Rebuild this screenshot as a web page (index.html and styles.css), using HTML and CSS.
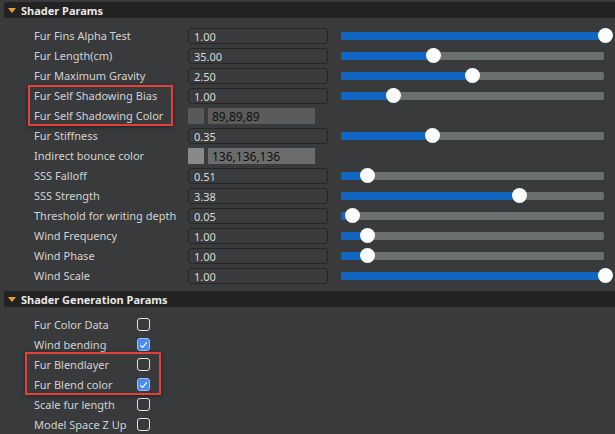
FILE: index.html
```html
<!DOCTYPE html>
<html>
<head>
<meta charset="utf-8">
<link rel="stylesheet" href="styles.css">
</head>
<body>
<div class="panel">
  <div class="section-head"><span class="tri"></span><span>Shader Params</span></div>
  <div class="params">
    <div class="row"><span class="label">Fur Fins Alpha Test</span><span class="field">1.00</span><div class="slider"><div class="fill" style="width:263px"></div><div class="thumb" style="left:264px"></div></div></div>
    <div class="row"><span class="label">Fur Length(cm)</span><span class="field">35.00</span><div class="slider"><div class="fill" style="width:92px"></div><div class="thumb" style="left:92px"></div></div></div>
    <div class="row"><span class="label">Fur Maximum Gravity</span><span class="field">2.50</span><div class="slider"><div class="fill" style="width:131px"></div><div class="thumb" style="left:131px"></div></div></div>
    <div class="row"><span class="label">Fur Self Shadowing Bias</span><span class="field">1.00</span><div class="slider"><div class="fill" style="width:52px"></div><div class="thumb" style="left:52px"></div></div></div>
    <div class="row"><span class="label">Fur Self Shadowing Color</span><div class="color"><span class="swatch" style="background:rgb(89,89,89)"></span><span class="color-text c89">89,89,89</span></div></div>
    <div class="row"><span class="label">Fur Stiffness</span><span class="field">0.35</span><div class="slider"><div class="fill" style="width:91px"></div><div class="thumb" style="left:91px"></div></div></div>
    <div class="row"><span class="label">Indirect bounce color</span><div class="color"><span class="swatch" style="background:rgb(136,136,136)"></span><span class="color-text c136">136,136,136</span></div></div>
    <div class="row"><span class="label">SSS Falloff</span><span class="field">0.51</span><div class="slider"><div class="fill" style="width:26px"></div><div class="thumb" style="left:26px"></div></div></div>
    <div class="row"><span class="label">SSS Strength</span><span class="field">3.38</span><div class="slider"><div class="fill" style="width:178px"></div><div class="thumb" style="left:178px"></div></div></div>
    <div class="row"><span class="label">Threshold for writing depth</span><span class="field">0.05</span><div class="slider"><div class="fill" style="width:11px"></div><div class="thumb" style="left:11px"></div></div></div>
    <div class="row"><span class="label">Wind Frequency</span><span class="field">1.00</span><div class="slider"><div class="fill" style="width:26px"></div><div class="thumb" style="left:26px"></div></div></div>
    <div class="row"><span class="label">Wind Phase</span><span class="field">1.00</span><div class="slider"><div class="fill" style="width:26px"></div><div class="thumb" style="left:26px"></div></div></div>
    <div class="row"><span class="label">Wind Scale</span><span class="field">1.00</span><div class="slider"><div class="fill" style="width:263px"></div><div class="thumb" style="left:264px"></div></div></div>
  </div>
  <div class="section-head head2"><span class="tri"></span><span>Shader Generation Params</span></div>
  <div class="checks">
    <div class="crow"><span class="label">Fur Color Data</span><span class="box"></span></div>
    <div class="crow"><span class="label">Wind bending</span><span class="box on"><svg viewBox="0 0 12 12" width="12" height="12"><path d="M2.6 6.4 L5 8.7 L9.6 3.2" fill="none" stroke="#fff" stroke-width="1.2"/></svg></span></div>
    <div class="crow"><span class="label">Fur Blendlayer</span><span class="box"></span></div>
    <div class="crow"><span class="label">Fur Blend color</span><span class="box on"><svg viewBox="0 0 12 12" width="12" height="12"><path d="M2.6 6.4 L5 8.7 L9.6 3.2" fill="none" stroke="#fff" stroke-width="1.2"/></svg></span></div>
    <div class="crow"><span class="label">Scale fur length</span><span class="box"></span></div>
    <div class="crow"><span class="label">Model Space Z Up</span><span class="box"></span></div>
  </div>
  <div class="mark mark1"></div>
  <div class="mark mark2"></div>
</div>
</body>
</html>
```
FILE: styles.css
```css
html, body {
  margin: 0;
  padding: 0;
  background: #393a3b;
  overflow: hidden;
}
body {
  width: 615px;
  height: 434px;
  font-family: "Noto Sans", "Open Sans", sans-serif;
  font-size: 11px;
  color: #d2d2d2;
}
.panel {
  position: relative;
  padding-top: 2px;
}
.section-head {
  margin-left: 4px;
  height: 16px;
  background: #222222;
  display: flex;
  align-items: center;
  gap: 5px;
  padding-left: 4px;
  font-weight: bold;
  font-size: 11px;
  color: #e6e6e6;
  border-radius: 2px 0 0 2px;
}
.tri {
  width: 0;
  height: 0;
  border-left: 4px solid transparent;
  border-right: 4px solid transparent;
  border-top: 5px solid #f0a02a;
  margin-top: 1px;
}
.params {
  padding-top: 7px;
  padding-bottom: 5px;
  display: flex;
  flex-direction: column;
}
.row {
  height: 20px;
  display: grid;
  grid-template-columns: 141px 140px 263px;
  column-gap: 13px;
  align-items: center;
  padding-left: 34px;
}
.label {
  white-space: nowrap;
  line-height: 20px;
  padding-top: 1px;
}
.field {
  box-sizing: border-box;
  height: 16px;
  border: 1px solid #262727;
  border-radius: 3px;
  background: #3a3b3c;
  line-height: 15px;
  padding-left: 5px;
  color: #dadada;
}
.color {
  display: flex;
  gap: 4px;
  align-items: center;
}
.swatch {
  width: 16px;
  height: 16px;
}
.color-text {
  width: 107px;
  height: 16px;
  font-size: 12px;
  line-height: 17px;
  padding-left: 4px;
  box-sizing: border-box;
  color: #111111;
}
.c89 { background: #5b5b5b; }
.c136 { background: #6c6c6c; }
.slider {
  position: relative;
  height: 8px;
  background: #6c6f6f;
  border-radius: 2px;
}
.fill {
  height: 8px;
  background: #1166c2;
  border-radius: 2px;
}
.thumb {
  position: absolute;
  top: 50%;
  width: 15px;
  height: 15px;
  margin-left: -7.5px;
  margin-top: -7.5px;
  border-radius: 50%;
  background: #ffffff;
}
.head2 {
  margin-top: 1px;
}
.checks {
  padding-top: 7px;
  display: flex;
  flex-direction: column;
}
.crow {
  height: 20px;
  display: grid;
  grid-template-columns: 103px 13px;
  align-items: center;
  padding-left: 34px;
}
.box {
  box-sizing: border-box;
  width: 13px;
  height: 13px;
  border: 1.5px solid #e2e2e2;
  border-radius: 3px;
  display: flex;
  align-items: center;
  justify-content: center;
}
.box.on {
  background: #4a8cf0;
  border-color: #9cc0f6;
}
.mark {
  position: absolute;
  border: 2px solid #e5413b;
  box-shadow: 0 1px 4px rgba(0, 0, 0, 0.45);
}
.mark1 {
  left: 28px;
  top: 85px;
  width: 141px;
  height: 37px;
}
.mark2 {
  left: 25px;
  top: 352px;
  width: 132px;
  height: 39px;
}
```
